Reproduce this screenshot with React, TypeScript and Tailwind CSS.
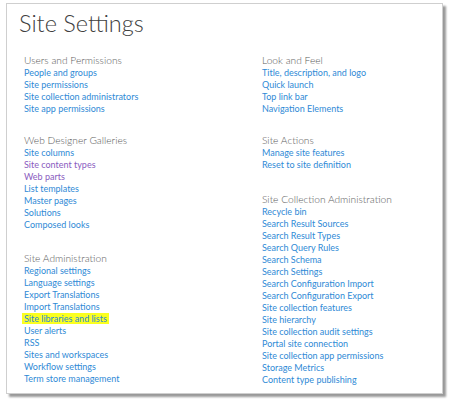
const font = { fontFamily: 'Lato, "Open Sans", "Liberation Sans", sans-serif' };

type LinkItem = { label: string; visited?: boolean; highlight?: boolean };

type SectionProps = {
  title: string;
  links: LinkItem[];
  className?: string;
};

function Section({ title, links, className = "" }: SectionProps) {
  return (
    <div className={className}>
      <h3 className="text-[10.2px] font-light leading-[13px] text-[#5c5c5c]">{title}</h3>
      <ul className="flex flex-col">
        {links.map((link) => (
          <li key={link.label} className="text-[9px] leading-[12px]">
            <a
              href="#"
              className={
                link.visited
                  ? "text-[#8a5cc0]"
                  : link.highlight
                    ? "-mx-[2px] bg-[#fbff1f] px-[2px] text-[#2f8ad6]"
                    : "text-[#2f8ad6]"
              }
            >
              {link.label}
            </a>
          </li>
        ))}
      </ul>
    </div>
  );
}

const usersAndPermissions: LinkItem[] = [
  { label: "People and groups" },
  { label: "Site permissions" },
  { label: "Site collection administrators" },
  { label: "Site app permissions" },
];

const galleries: LinkItem[] = [
  { label: "Site columns" },
  { label: "Site content types", visited: true },
  { label: "Web parts", visited: true },
  { label: "List templates" },
  { label: "Master pages" },
  { label: "Solutions" },
  { label: "Composed looks" },
];

const siteAdministration: LinkItem[] = [
  { label: "Regional settings" },
  { label: "Language settings" },
  { label: "Export Translations" },
  { label: "Import Translations" },
  { label: "Site libraries and lists", highlight: true },
  { label: "User alerts" },
  { label: "RSS" },
  { label: "Sites and workspaces" },
  { label: "Workflow settings" },
  { label: "Term store management" },
];

const lookAndFeel: LinkItem[] = [
  { label: "Title, description, and logo" },
  { label: "Quick launch" },
  { label: "Top link bar" },
  { label: "Navigation Elements" },
];

const siteActions: LinkItem[] = [
  { label: "Manage site features" },
  { label: "Reset to site definition" },
];

const collectionAdministration: LinkItem[] = [
  { label: "Recycle bin" },
  { label: "Search Result Sources" },
  { label: "Search Result Types" },
  { label: "Search Query Rules" },
  { label: "Search Schema" },
  { label: "Search Settings" },
  { label: "Search Configuration Import" },
  { label: "Search Configuration Export" },
  { label: "Site collection features" },
  { label: "Site hierarchy" },
  { label: "Site collection audit settings" },
  { label: "Portal site connection" },
  { label: "Site collection app permissions" },
  { label: "Storage Metrics" },
  { label: "Content type publishing" },
];

export default function App() {
  return (
    <div className="h-[404px] w-[451px] overflow-hidden bg-white pl-[6px] pt-[3px]" style={font}>
      <div className="h-[391px] w-[437px] border border-[#cfcfcf] bg-white shadow-[3px_3px_2px_rgba(0,0,0,0.4)]">
        <h1 className="ml-[12px] mt-[4px] text-[23.5px] font-light leading-[30px] text-[#404040]">
          Site Settings
        </h1>
        <div className="mt-[15.5px] grid grid-cols-[238px_1fr] pl-[17px]">
          <div className="flex flex-col">
            <Section title="Users and Permissions" links={usersAndPermissions} />
            <Section title="Web Designer Galleries" links={galleries} className="mt-[19px]" />
            <Section title="Site Administration" links={siteAdministration} className="mt-[21px]" />
          </div>
          <div className="flex flex-col">
            <Section title="Look and Feel" links={lookAndFeel} />
            <Section title="Site Actions" links={siteActions} className="mt-[19px]" />
            <Section
              title="Site Collection Administration"
              links={collectionAdministration}
              className="mt-[22px]"
            />
          </div>
        </div>
      </div>
    </div>
  );
}
